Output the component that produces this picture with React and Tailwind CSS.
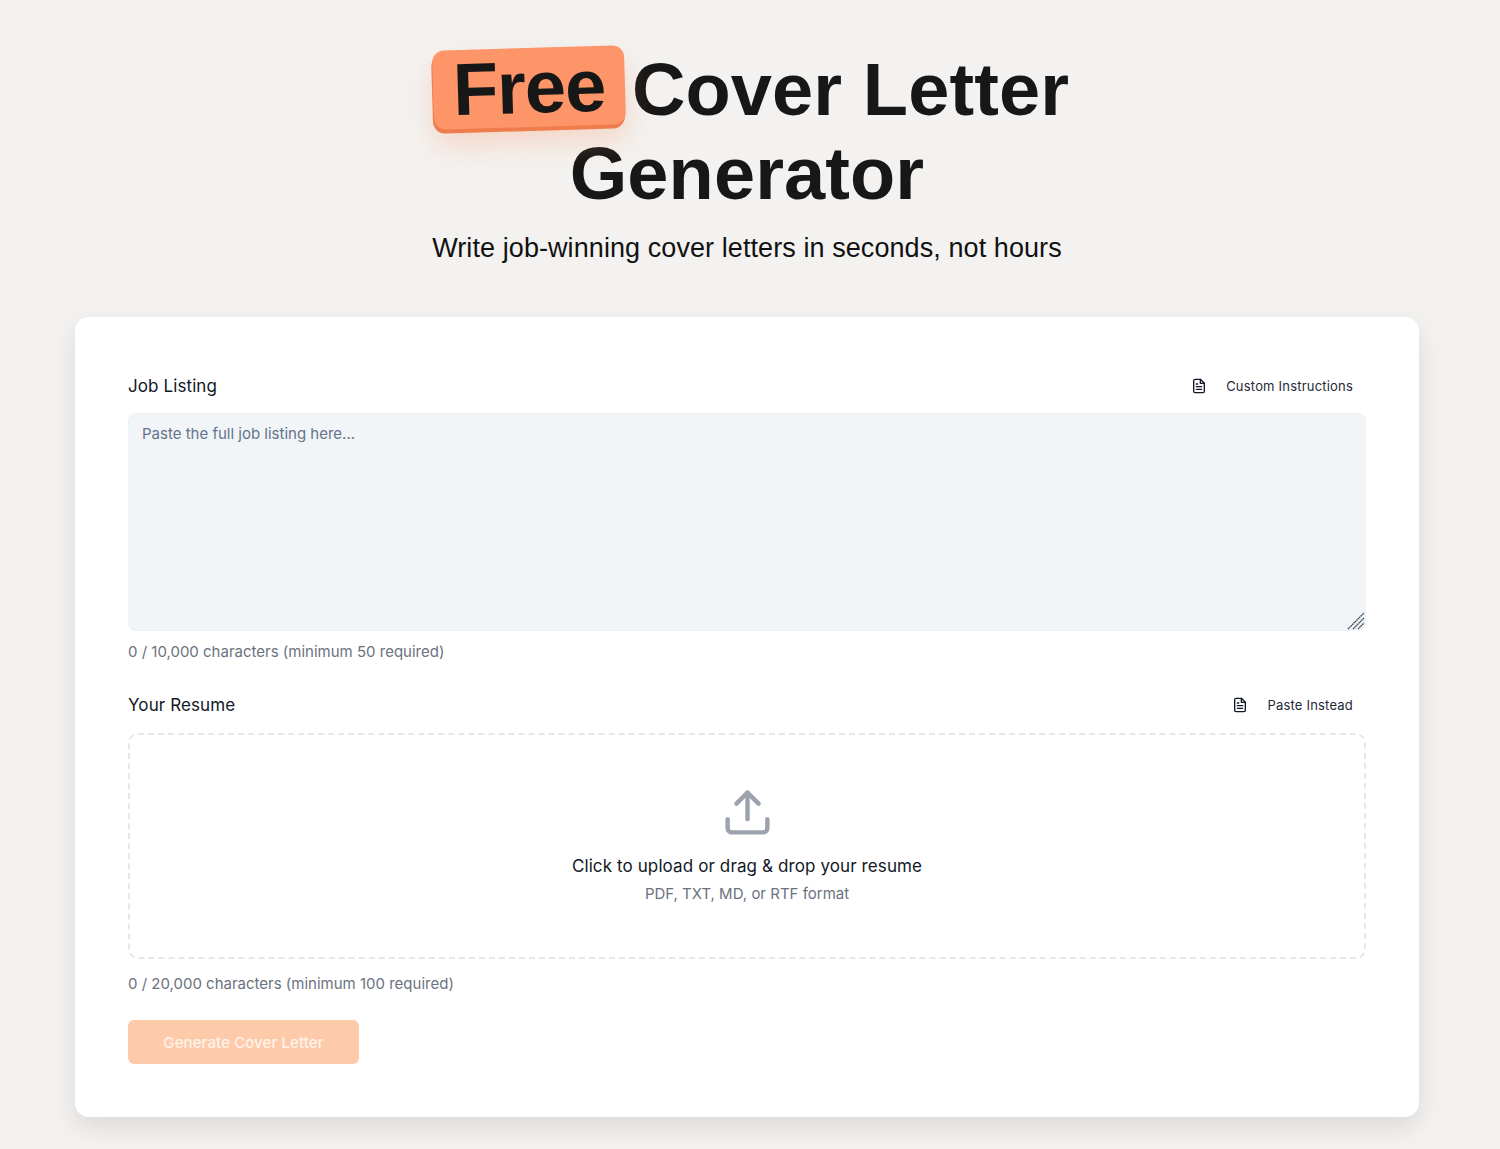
import React from 'react';
import { Upload } from 'lucide-react';

const DocIcon = () => (
  <svg className="-mt-[2px]" width="16" height="16" viewBox="0 0 24 24" fill="none" stroke="#111827" strokeWidth="2" strokeLinecap="round" strokeLinejoin="round">
    <path d="M14 2H6a2 2 0 0 0-2 2v16a2 2 0 0 0 2 2h12a2 2 0 0 0 2-2V8z" />
    <path d="M14 2v6h6" />
    <path d="M8 13h8" />
    <path d="M8 17h8" />
    <path d="M8 9h2" />
  </svg>
);

const ResizeGrip = () => (
  <svg className="absolute right-[1px] bottom-[1px] pointer-events-none" width="18" height="18" viewBox="0 0 18 18" stroke="#374151" strokeWidth="1.3" strokeDasharray="1.5 0.5">
    <path d="M1 17 17 1" />
    <path d="M6 17 17 6" />
    <path d="M11 17 17 11" />
  </svg>
);

const FieldHeader = ({ label, action }) => (
  <div className="flex items-center justify-between h-[26px]">
    <span className="text-[17px] text-[#111827] tracking-[0.1px]">{label}</span>
    <button className="flex items-center gap-[19px] pr-[13px] text-[13px] tracking-[0.2px] text-[#1f2937]">
      <DocIcon />
      {action}
    </button>
  </div>
);

export default function App() {
  return (
    <div className="min-h-[1149px] bg-[#f3f2f0] pr-[6px] font-['Inter',sans-serif] overflow-hidden">
      <div className="w-[1344px] mx-auto">
        <header className="pt-[48px] text-center">
          <h1 className="font-['Liberation_Sans',sans-serif] text-[74px] leading-[84px] font-bold tracking-[0.1px] text-[#171717]">
            <span className="inline-block relative -translate-y-[2px] rotate-[-1.7deg] bg-[#fd9568] rounded-[12px] w-[192px] h-[79px] leading-[80px] ml-[8px] mr-[7px] tracking-[-1px] shadow-[-1px_4px_0_#ee7c4c,0_16px_28px_rgba(253,149,104,0.3)]">
              Free
            </span>
            Cover Letter
            <br />
            Generator
          </h1>
          <p className="mt-[14px] font-['Liberation_Sans',sans-serif] text-[27px] leading-[36px] tracking-[0.08px] text-[#111111]">
            Write job-winning cover letters in seconds, not hours
          </p>
        </header>

        <main className="mt-[51px] bg-white rounded-[14px] h-[800px] px-[53px] pt-[57px] shadow-[0_10px_24px_rgba(0,0,0,0.1)]">
          <FieldHeader label="Job Listing" action="Custom Instructions" />
          <div className="relative mt-[13px]">
            <textarea
              placeholder="Paste the full job listing here..."
              className="block w-full h-[218px] resize-none bg-[#f1f5f8] border border-[#eef2f6] rounded-[8px] px-[13px] py-[10px] text-[15px] leading-[20px] placeholder:text-[#64748b] outline-none"
            />
            <ResizeGrip />
          </div>
          <p className="mt-[11px] text-[15px] leading-[20px] text-[#6b7280]">
            0 / 10,000 characters (minimum 50 required)
          </p>

          <div className="mt-[31px]">
            <FieldHeader label="Your Resume" action="Paste Instead" />
          </div>
          <div className="mt-[14px] h-[226px] border-2 border-dashed border-[#e5e7eb] rounded-[10px] flex flex-col items-center">
            <Upload className="mt-[51px] text-[#9ca3af]" size={53} strokeWidth={2} />
            <p className="mt-[15px] text-[17px] leading-[24px] tracking-[0.11px] text-[#111827]">Click to upload or drag &amp; drop your resume</p>
            <p className="mt-[6px] text-[15px] leading-[20px] text-[#6b7280]">PDF, TXT, MD, or RTF format</p>
          </div>
          <p className="mt-[15px] text-[15px] leading-[20px] text-[#6b7280]">
            0 / 20,000 characters (minimum 100 required)
          </p>
          <button className="block mt-[26px] w-[231px] h-[44px] pt-[2px] rounded-[6px] bg-[#fecbaa] text-[15px] tracking-[0.1px] font-medium text-[#fff3ea]">
            Generate Cover Letter
          </button>
        </main>
      </div>
    </div>
  );
}
